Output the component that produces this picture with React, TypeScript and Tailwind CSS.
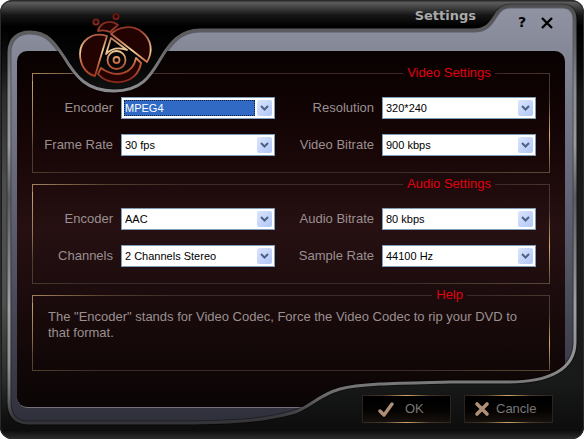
import React from 'react';
import clsx from 'clsx';

const OPENING =
  'M9 52C9 38 19 32 30 32C47 32 54 42 64 57C76 77 87 91 114 91C141 91 150 77 161 58C170 43 180 30 200 30H474C486 30 490 24 495 16C499 9 503 6 510 6H562C571 6 575 11 575 20V342C575 370 548 382 509 382H450C410 383 362 383 340 389C318 395 308 409 292 413C262 421 230 423 170 423H28C15 423 9 415 9 402Z';

const Skin: React.FC = () => (
  <svg
    className="pointer-events-none absolute inset-0 h-full w-full"
    viewBox="0 0 584 439"
    preserveAspectRatio="none"
    aria-hidden="true"
  >
    <defs>
      <linearGradient id="frame" x1="0" y1="0" x2="0" y2="439" gradientUnits="userSpaceOnUse">
        <stop offset="0" stopColor="#222" />
        <stop offset="0.006" stopColor="#5c5c5c" />
        <stop offset="0.035" stopColor="#151515" />
        <stop offset="0.06" stopColor="#000" />
        <stop offset="0.16" stopColor="#080808" />
        <stop offset="0.22" stopColor="#151616" />
        <stop offset="0.6" stopColor="#1c1d1d" />
        <stop offset="0.87" stopColor="#181919" />
        <stop offset="0.98" stopColor="#0d0d0d" />
        <stop offset="1" stopColor="#2c2c2c" />
      </linearGradient>
      <linearGradient id="rim" x1="0" y1="0" x2="0" y2="439" gradientUnits="userSpaceOnUse">
        <stop offset="0" stopColor="#4c4c4e" />
        <stop offset="0.1" stopColor="#626264" />
        <stop offset="0.2" stopColor="#8b8b8f" />
        <stop offset="0.33" stopColor="#9a9a9c" />
        <stop offset="0.45" stopColor="#5c5c60" />
        <stop offset="0.7" stopColor="#a0a0a2" />
        <stop offset="0.83" stopColor="#8f8f8f" />
        <stop offset="0.9" stopColor="#6a6a6a" />
        <stop offset="0.95" stopColor="#38383c" />
        <stop offset="1" stopColor="#2a2a2e" />
      </linearGradient>
      <linearGradient id="side" x1="0" y1="30" x2="0" y2="420" gradientUnits="userSpaceOnUse">
        <stop offset="0" stopColor="#777" stopOpacity="0" />
        <stop offset="0.4" stopColor="#777" />
        <stop offset="0.7" stopColor="#777" />
        <stop offset="1" stopColor="#777" stopOpacity="0" />
      </linearGradient>
    </defs>
    <path d={`M0 0H584V439H0Z${OPENING}`} fill="url(#frame)" fillRule="evenodd" />
    <rect x="2" y="30" width="6" height="390" fill="url(#side)" opacity="0.55" />
    <rect x="0.5" y="0.5" width="583" height="438" rx="12" fill="none" stroke="#2b2b2b" />
    <path d={OPENING} fill="none" stroke="#000" strokeOpacity="0.35" strokeWidth="5" />
    <path d={OPENING} fill="none" stroke="url(#rim)" strokeWidth="3" />
  </svg>
);

const Logo: React.FC = () => (
  <svg className="h-[74px] w-[76px] shrink-0" viewBox="0 0 76 74" role="img" aria-label="Logo">
    <defs>
      <linearGradient id="copper" x1="0" y1="0" x2="0" y2="74" gradientUnits="userSpaceOnUse">
        <stop offset="0" stopColor="#5a0f0c" />
        <stop offset="0.25" stopColor="#9c3e2a" />
        <stop offset="0.52" stopColor="#f3cf9c" />
        <stop offset="0.7" stopColor="#c4603a" />
        <stop offset="1" stopColor="#7a1a12" />
      </linearGradient>
    </defs>
    <g fill="#230202" stroke="url(#copper)" strokeWidth="1.8" strokeLinejoin="round">
      <circle cx="18" cy="10" r="2.6" />
      <circle cx="38" cy="4.5" r="2.6" />
      <path d="M20 19C22 10 33 7 40 13L32 20C28 18 24 18 20 19Z" />
      <path d="M29 24C14 19 2 29 2 42C2 53 8 62 17 64Z" />
      <path d="M33 22C40 15 54 12 64 20C74 28 75 40 69 50Z" />
      <path d="M23 56L20 62C32 76 60 72 63 51L58 46C55 62 38 67 23 56Z" />
    </g>
    <g fill="none" stroke="url(#copper)" strokeWidth="1.8" strokeLinejoin="round">
      <path d="M33 26L28 42C34 36 41 35 49 38Z" />
      <circle cx="38.5" cy="48" r="9" />
      <circle cx="38.5" cy="48" r="3" />
    </g>
  </svg>
);

interface SelectFieldProps {
  id: string;
  label: string;
  options: string[];
  active?: boolean;
}

const SelectField: React.FC<SelectFieldProps> = ({ id, label, options, active }) => (
  <>
    <label htmlFor={id} className="pr-2 text-right text-[13px] text-[#9b9090]">
      {label}
    </label>
    <div className="flex h-[22px] min-w-0 gap-[2px] border border-[#7f9db9] bg-white p-[2px]">
      <select
        id={id}
        className={clsx(
          'min-w-0 flex-1 appearance-none text-[11px] outline-none',
          active
            ? 'border border-dotted border-[#0b1c44] bg-[#316ac5] leading-[14px] text-white'
            : 'pl-px leading-4 text-black'
        )}
      >
        {options.map((option) => (
          <option key={option}>{option}</option>
        ))}
      </select>
      <span className="flex w-[15px] items-center justify-center rounded-xs bg-linear-to-br from-[#dbe5fd] to-[#b0c6f6]">
        <svg className="h-[6px] w-[9px]" viewBox="0 0 9 6" aria-hidden="true">
          <path d="M1 1L4.5 4.5L8 1" fill="none" stroke="#4d6185" strokeWidth="2" />
        </svg>
      </span>
    </div>
  </>
);

interface GroupProps {
  title: string;
  legendClass: string;
  children: React.ReactNode;
}

const Group: React.FC<GroupProps> = ({ title, legendClass, children }) => (
  <fieldset className="relative border [border-image:linear-gradient(135deg,#a5825c_0%,#55402f_12%,#3b2a28_25%,#3b2a28_75%,#5d4836_100%)_1] before:absolute before:top-0 before:-left-px before:h-3/4 before:w-px before:bg-linear-to-b before:from-[#c9a276] before:via-[#a07c55] before:to-transparent after:absolute after:-right-px after:bottom-0 after:h-4/5 after:w-px after:bg-linear-to-b after:from-transparent after:via-[#d9a970] after:to-[#5d4836]">
    <legend className={clsx('ml-auto text-center text-[13px] leading-4 text-[#e0000f]', legendClass)}>{title}</legend>
    {children}
  </fieldset>
);

const fieldGrid = 'grid grid-cols-[88px_1fr_107px_1fr] items-center gap-y-[15px] pt-4 pr-[13px] pb-4';

const actionButton =
  'flex h-7 w-[89px] items-center border bg-linear-to-b from-black to-[#17120e] text-[13px] text-[#777] [border-image:linear-gradient(90deg,#2a231d_0%,#4a3826_25%,#d3a66c_50%,#4a3826_75%,#2a231d_100%)_1]';

const App: React.FC = () => {
  return (
    <div className="relative flex min-h-screen w-full flex-col overflow-hidden rounded-xl bg-linear-to-b from-[#9295a3] via-[#5d5f70] to-[#2b2c36] font-['Liberation_Sans',Arial,sans-serif]">
      <div className="h-[51px] shrink-0" />
      <main className="mr-[19px] ml-[17px] flex flex-1 flex-col gap-[3px] rounded-[10px] border-b border-[#77717c] bg-linear-to-b from-[#080101] via-[#261012] to-[#0b0505] pt-[14px] pr-[15px] pb-8 pl-[15px]">
        <Group title="Video Settings" legendClass="mr-[54px] w-[92px]">
          <div className={fieldGrid}>
            <SelectField id="video-encoder" label="Encoder" options={['MPEG4']} active />
            <SelectField id="resolution" label="Resolution" options={['320*240']} />
            <SelectField id="frame-rate" label="Frame Rate" options={['30 fps']} />
            <SelectField id="video-bitrate" label="Video Bitrate" options={['900 kbps']} />
          </div>
        </Group>
        <Group title="Audio Settings" legendClass="mr-[54px] w-[92px]">
          <div className={fieldGrid}>
            <SelectField id="audio-encoder" label="Encoder" options={['AAC']} />
            <SelectField id="audio-bitrate" label="Audio Bitrate" options={['80 kbps']} />
            <SelectField id="channels" label="Channels" options={['2 Channels Stereo']} />
            <SelectField id="sample-rate" label="Sample Rate" options={['44100 Hz']} />
          </div>
        </Group>
        <Group title="Help" legendClass="mr-[82px] px-1">
          <p className="min-h-[67px] px-[15px] pt-[6px] text-[13px] leading-4 text-[#9b9090]">
            The "Encoder" stands for Video Codec, Force the Video Codec to rip your DVD to that format.
          </p>
        </Group>
      </main>

      <Skin />

      <header className="absolute inset-x-0 top-0 z-10 flex items-start pr-[30px] pl-[78px]">
        <div className="pt-3">
          <Logo />
        </div>
        <h1 className="ml-auto pt-2 font-['DejaVu_Sans',sans-serif] text-[13px] leading-4 font-bold text-[#a9a9a9]">
          Settings
        </h1>
        <button
          type="button"
          aria-label="Help"
          className="ml-10 w-3 pt-[14px] font-['DejaVu_Sans',sans-serif] text-[14px] leading-4 font-bold text-black"
        >
          ?
        </button>
        <button type="button" aria-label="Close" className="ml-3 pt-[16px]">
          <svg className="h-[14px] w-[14px]" viewBox="0 0 14 14" aria-hidden="true">
            <path d="M2 2L12 12M12 2L2 12" stroke="#000" strokeWidth="2.4" />
          </svg>
        </button>
      </header>

      <footer className="relative z-10 -mt-[13px] flex justify-end gap-[13px] pr-[31px] pb-4">
        <button type="button" className={clsx(actionButton, 'gap-[10px] pl-[15px]')}>
          <svg className="h-[17px] w-[17px]" viewBox="0 0 17 17" aria-hidden="true">
            <path d="M2 10L6 14L14 3" fill="none" stroke="#b08f78" strokeWidth="3.4" strokeLinecap="round" strokeLinejoin="round" />
          </svg>
          OK
        </button>
        <button type="button" className={clsx(actionButton, 'gap-[6px] pl-[9px]')}>
          <svg className="h-4 w-4" viewBox="0 0 16 16" aria-hidden="true">
            <path d="M3 3L13 13M13 3L3 13" stroke="#b08f78" strokeWidth="3.6" strokeLinecap="round" />
          </svg>
          Cancle
        </button>
      </footer>
    </div>
  );
};

export default App;
